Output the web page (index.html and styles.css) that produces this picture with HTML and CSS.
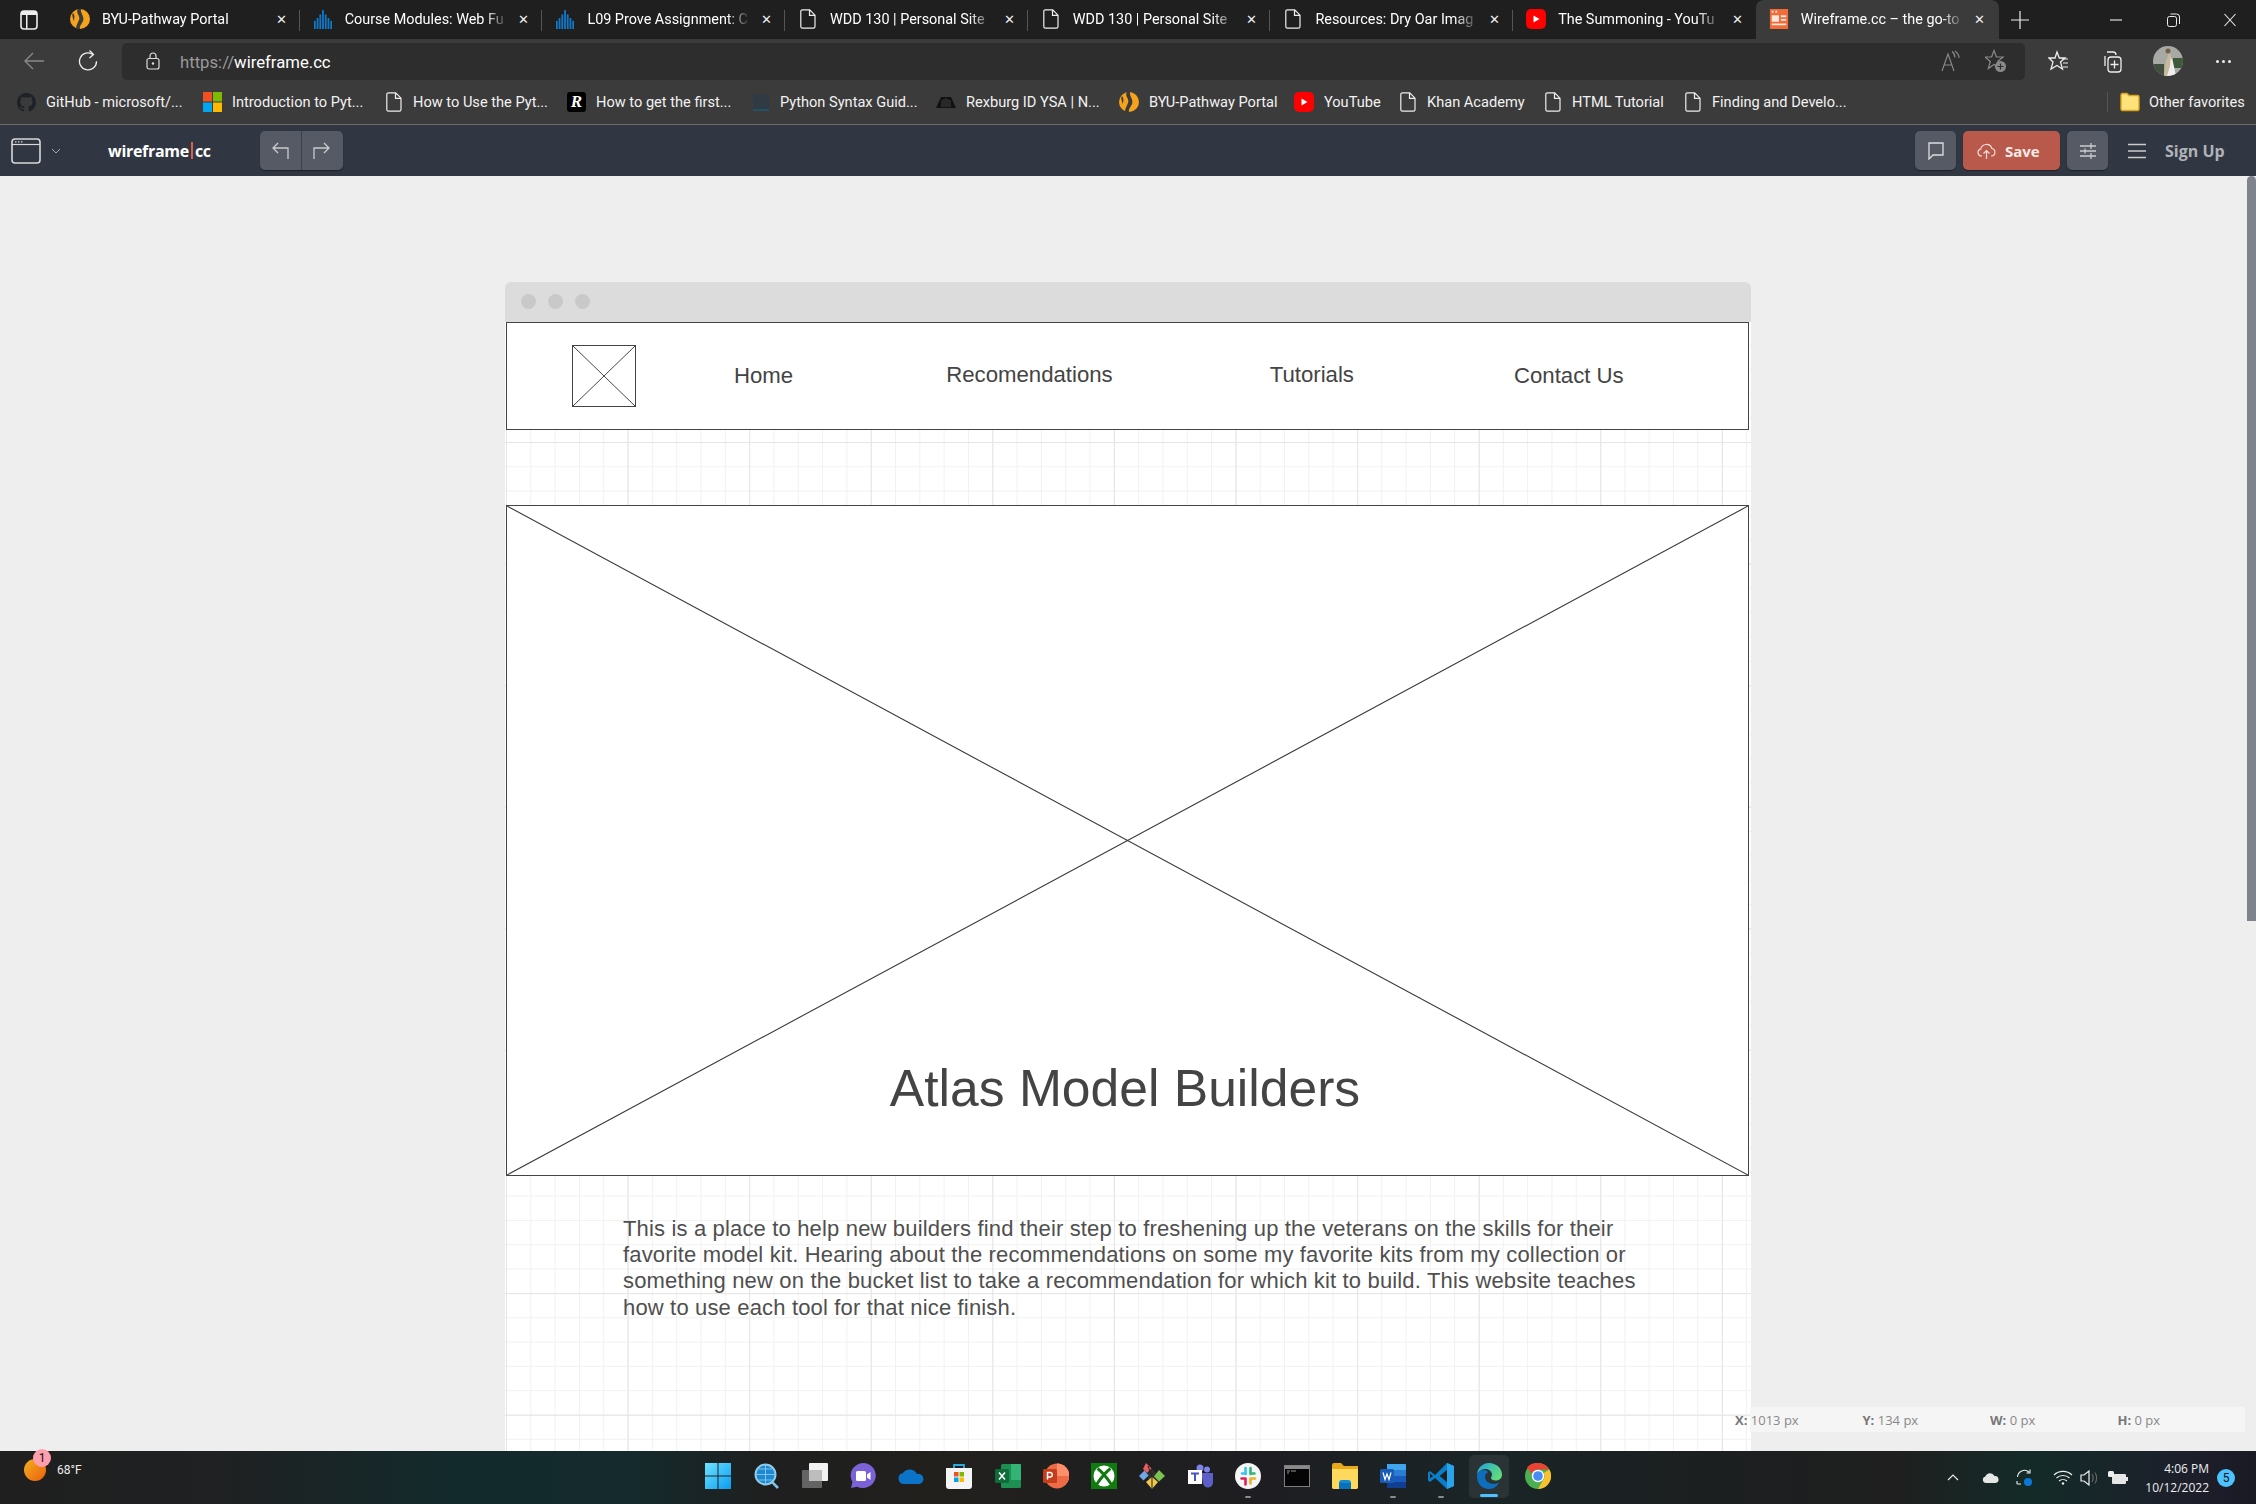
FILE: index.html
```html
<!DOCTYPE html>
<html lang="en">
<head>
  <meta charset="UTF-8">
  <title>Wireframe.cc – the go-to wireframing tool</title>
  <link rel="stylesheet" href="styles.css">
</head>
<body>
  <svg class="defs" width="0" height="0">
    <symbol id="doc" viewBox="0 0 16 20"><path d="M2.5 .8h7.2l5.3 5.4v11.3a1.7 1.7 0 0 1-1.7 1.7H2.5A1.7 1.7 0 0 1 .8 17.500V2.500A1.700 1.700 0 0 1 2.500 .8zM9.500 1v5.300H15" fill="none" stroke="#eee" stroke-width="1.200"/></symbol>
    <symbol id="byu" viewBox="0 0 20 20"><circle cx="10" cy="10" r="10" fill="#f5a21d"/><path d="M8 0C5 4 11 7 9 11c-1 3-3 5-3 9h4c-1-3 2-5 3-8 2-4-3-8-2-12zM3 4c-2 3 1 5 0 8 2-2 2-6 0-8z" fill="#3a3a3a"/></symbol>
    <symbol id="bars" viewBox="0 0 20 22"><path d="M1 13v9M4 10v12M7 6v16M10 1v21M13 6v16M16 10v12M19 13v9" stroke="#0f78c8" stroke-width="2"/></symbol>
    <symbol id="yt" viewBox="0 0 20 20"><rect width="20" height="20" y="0" rx="5" fill="#f00"/><path d="M7.500 6.500l6 3.500-6 3.500z" fill="#fff"/></symbol>
  </svg>

  <div class="tabstrip">
    <div class="sidebtn">
      <svg width="18" height="20" viewBox="0 0 18 20"><rect x="1" y="1" width="16" height="18" rx="3" fill="none" stroke="#eee" stroke-width="1.600"/><path d="M1 5h16V4a3 3 0 0 0-3-3H4a3 3 0 0 0-3 3zM6 5h1.500v14H6z" fill="#eee"/></svg>
    </div>
    <div class="tab"><svg class="fav" viewBox="0 0 20 20"><use href="#byu"/></svg><span class="tab-title">BYU-Pathway Portal</span><span class="tab-x">✕</span></div>
    <div class="tab"><svg class="fav" viewBox="0 0 20 22"><use href="#bars"/></svg><span class="tab-title">Course Modules: Web Fu</span><span class="tab-x">✕</span></div>
    <div class="tab"><svg class="fav" viewBox="0 0 20 22"><use href="#bars"/></svg><span class="tab-title">L09 Prove Assignment: C</span><span class="tab-x">✕</span></div>
    <div class="tab"><svg class="fav" viewBox="0 0 16 20"><use href="#doc"/></svg><span class="tab-title">WDD 130 | Personal Site</span><span class="tab-x">✕</span></div>
    <div class="tab"><svg class="fav" viewBox="0 0 16 20"><use href="#doc"/></svg><span class="tab-title">WDD 130 | Personal Site</span><span class="tab-x">✕</span></div>
    <div class="tab"><svg class="fav" viewBox="0 0 16 20"><use href="#doc"/></svg><span class="tab-title">Resources: Dry Oar Imag</span><span class="tab-x">✕</span></div>
    <div class="tab tab-beforeactive"><svg class="fav" viewBox="0 0 20 20"><use href="#yt"/></svg><span class="tab-title">The Summoning - YouTu</span><span class="tab-x">✕</span></div>
    <div class="tab tab-active">
      <svg class="fav" viewBox="0 0 20 22"><rect width="20" height="22" fill="#f26b38"/><path d="M2 2h2v2H2zM6 2h2v2H6zM2 7h8v7H2zM12 7h6v2h-6zM12 11h6v2h-6zM2 16h16v2H2z" fill="#ffe6da"/></svg>
      <span class="tab-title">Wireframe.cc – the go-to</span><span class="tab-x">✕</span>
    </div>
    <div class="newtab"><svg width="18" height="18" viewBox="0 0 18 18"><path d="M9 0v18M0 9h18" stroke="#eee" stroke-width="1.200"/></svg></div>
    <div class="winbtns">
      <svg width="14" height="14" viewBox="0 0 14 14"><path d="M1 7h12" stroke="#eee" stroke-width="1.100"/></svg>
      <svg width="14" height="14" viewBox="0 0 14 14"><rect x="1.500" y="3.500" width="9" height="10" rx="2" fill="none" stroke="#eee"/><path d="M4.500 1h6a3 3 0 0 1 3 3v7" fill="none" stroke="#eee"/></svg>
      <svg width="14" height="14" viewBox="0 0 14 14"><path d="M1.500 1l11 12M12.500 1l-11 12" stroke="#eee" stroke-width="1.100"/></svg>
    </div>
  </div>

  <div class="toolbar">
    <svg class="tool-back" width="22" height="18" viewBox="0 0 22 18"><path d="M21 9H2M10 1L2 9l8 8" fill="none" stroke="#8a8a8a" stroke-width="1.300"/></svg>
    <svg class="tool-reload" width="20" height="22" viewBox="0 0 20 22"><path d="M15 4.500a8.500 8.500 0 1 0 3.500 6.800" fill="none" stroke="#eee" stroke-width="1.300"/><path d="M11.500 0.500l4 4-4 3.500" fill="none" stroke="#eee" stroke-width="1.300"/></svg>
    <div class="omnibox">
      <svg class="lock" width="14" height="18" viewBox="0 0 14 18"><rect x="1" y="6.500" width="12" height="10.500" rx="2" fill="none" stroke="#ddd" stroke-width="1.200"/><path d="M4 6.500V4a3 3 0 0 1 6 0v2.500" fill="none" stroke="#ddd" stroke-width="1.200"/><circle cx="7" cy="11.500" r="1.200" fill="#ddd"/></svg>
      <span class="url"><span class="url-scheme">https://</span>wireframe.cc</span>
      <svg class="read" width="20" height="22" viewBox="0 0 20 22"><path d="M1 21L7 4l6 17M3.500 15h7M11 1.500c2 1.500 3 3.500 3 6M14 1c2 1.500 4 4 4 7" fill="none" stroke="#8a8a8a" stroke-width="1.100"/></svg>
      <svg class="addfav" width="22" height="24" viewBox="0 0 22 24"><path d="M9 1.500l2.400 6.500h6.600l-5.300 4.500 2 7L9 15.500 3.300 19.500l2-7L0 8h6.600z" fill="none" stroke="#8a8a8a" stroke-width="1.200"/><circle cx="15.500" cy="17.500" r="5.500" fill="#8a8a8a"/><path d="M15.500 14.500v6M12.500 17.500h6" stroke="#2d2d2d" stroke-width="1.200"/></svg>
    </div>
    <svg class="tool-favs" width="20" height="22" viewBox="0 0 20 22"><path d="M9 2l2.300 6H17l-4.500 4 2 7L9 15.500 3 19l2-7L1 8h6z" fill="none" stroke="#eee" stroke-width="1.300"/><path d="M14 9h6M15 13h5M15 17h5" stroke="#eee" stroke-width="1.200"/></svg>
    <svg class="tool-coll" width="20" height="24" viewBox="0 0 20 24"><path d="M5 3h6a3 3 0 0 1 3 3M3 7v10" fill="none" stroke="#eee" stroke-width="1.300"/><rect x="6" y="8" width="13" height="15" rx="3" fill="none" stroke="#eee" stroke-width="1.300"/><path d="M12.500 11.500v8M8.500 15.500h8" stroke="#eee" stroke-width="1.300"/></svg>
    <svg class="avatar" width="30" height="30" viewBox="0 0 30 30"><defs><clipPath id="avaclip"><circle cx="15" cy="15" r="15"/></clipPath></defs><g clip-path="url(#avaclip)"><rect width="30" height="30" fill="#a7a9a4"/><rect x="20" y="12" width="10" height="10" fill="#3f5a3a"/><rect y="18" width="11" height="12" fill="#40503c"/><path d="M11 30l3-14 3-6 3 6 3 14z" fill="#eee"/><path d="M13 15l3-8 2 1-1 12-3 10h-3z" fill="#c9b89a"/><circle cx="15" cy="5" r="2.500" fill="#7a5f48"/></g></svg>
    <div class="tool-more"><i></i><i></i><i></i></div>
  </div>

  <div class="bookmarks">
    <div class="bm bm-github">
      <svg width="19" height="19" viewBox="0 0 20 20"><path d="M10 0a10 10 0 0 0-3.200 19.500c.5.100.7-.2.700-.5v-1.800c-2.800.6-3.400-1.300-3.400-1.300-.4-1.200-1.100-1.500-1.100-1.500-.9-.6.100-.6.100-.6 1 .1 1.500 1 1.500 1 .9 1.500 2.300 1.100 2.900.8.100-.6.300-1.100.6-1.300-2.200-.3-4.600-1.100-4.600-5 0-1.100.4-2 1-2.700-.1-.3-.4-1.300.1-2.700 0 0 .8-.3 2.800 1a9.500 9.500 0 0 1 5 0c1.900-1.300 2.800-1 2.800-1 .5 1.400.2 2.400.1 2.700.6.700 1 1.600 1 2.700 0 3.900-2.300 4.700-4.600 5 .4.300.7.900.7 1.900V19c0 .3.200.6.700.5A10 10 0 0 0 10 0z" fill="#1d2228"/></svg>
      GitHub - microsoft/...
    </div>
    <div class="bm bm-ms">
      <svg width="19" height="20" viewBox="0 0 19 20"><rect width="9" height="9.500" fill="#f25022"/><rect x="10" width="9" height="9.500" fill="#7fba00"/><rect y="10.500" width="9" height="9.500" fill="#00a4ef"/><rect x="10" y="10.500" width="9" height="9.500" fill="#ffb900"/></svg>
      Introduction to Pyt...
    </div>
    <div class="bm bm-use bm-doc"><svg width="16" height="20" viewBox="0 0 16 20"><use href="#doc"/></svg>How to Use the Pyt...</div>
    <div class="bm bm-first">
      <span class="bm-r">R</span>
      How to get the first...
    </div>
    <div class="bm bm-py">
      <svg width="18" height="20" viewBox="0 0 18 20"><rect x="1" y="2" width="16" height="16" fill="#2f3a42"/><path d="M1 18h16" stroke="#1e5a78" stroke-width="1.500"/></svg>
      Python Syntax Guid...
    </div>
    <div class="bm bm-rex">
      <svg width="20" height="14" viewBox="0 0 20 14"><path d="M0 13L5 2h10l5 11z" fill="#111"/><path d="M6 12V5M10 12V3M14 12V5M8 12V4M12 12V4" stroke="#555" stroke-width=".7"/></svg>
      Rexburg ID YSA | N...
    </div>
    <div class="bm bm-byu"><svg width="20" height="20" viewBox="0 0 20 20"><use href="#byu"/></svg>BYU-Pathway Portal</div>
    <div class="bm bm-yt"><svg width="20" height="20" viewBox="0 0 20 20"><use href="#yt"/></svg>YouTube</div>
    <div class="bm bm-khan bm-doc"><svg width="16" height="20" viewBox="0 0 16 20"><use href="#doc"/></svg>Khan Academy</div>
    <div class="bm bm-html bm-doc"><svg width="16" height="20" viewBox="0 0 16 20"><use href="#doc"/></svg>HTML Tutorial</div>
    <div class="bm bm-find bm-doc"><svg width="16" height="20" viewBox="0 0 16 20"><use href="#doc"/></svg>Finding and Develo...</div>
    <div class="bm bm-other">
      <svg width="20" height="20" viewBox="0 0 20 20"><path d="M1 3a1.500 1.500 0 0 1 1.500-1.500H7l2 2h8.500A1.500 1.500 0 0 1 19 5v12a1.500 1.500 0 0 1-1.500 1.500h-15A1.500 1.500 0 0 1 1 17z" fill="#ffe27a" stroke="#d9a520" stroke-width="1.400"/></svg>
      Other favorites
    </div>
  </div>

  <div class="appbar">
    <svg class="app-win" width="30" height="26" viewBox="0 0 30 26"><rect x="1" y="1" width="28" height="24" rx="3" fill="none" stroke="#d8d8d8" stroke-width="1.600"/><path d="M1 6.500h28" stroke="#d8d8d8" stroke-width="1.200"/><path d="M4 3.800h1.500M7 3.800h1.500M10 3.800h1.500" stroke="#d8d8d8" stroke-width="1.200"/></svg>
    <svg class="app-chev" width="10" height="6" viewBox="0 0 10 6"><path d="M1 1l4 4 4-4" fill="none" stroke="#aaa"/></svg>
    <div class="app-logo">wireframe<span class="app-logo-bar"></span>cc</div>
    <div class="btngroup">
      <div class="appbtn"><svg width="18" height="18" viewBox="0 0 18 18"><path d="M17 17V6H2M7 1L2 6l5 5" fill="none" stroke="#ccc" stroke-width="1.300"/></svg></div>
      <div class="appbtn"><svg width="18" height="18" viewBox="0 0 18 18"><path d="M1 17V6h15M11 1l5 5-5 5" fill="none" stroke="#ccc" stroke-width="1.300"/></svg></div>
    </div>
    <div class="app-spacer"></div>
    <div class="appbtn appbtn-solo"><svg width="16" height="18" viewBox="0 0 16 18"><path d="M1 1h14v12H5l-4 4z" fill="none" stroke="#ddd" stroke-width="1.300"/></svg></div>
    <div class="savebtn">
      <svg width="19" height="19" viewBox="0 0 19 19"><path d="M5 15H4.500a3.500 3.500 0 0 1-.8-6.900 5.800 5.800 0 0 1 11.200-.6A3.800 3.800 0 0 1 14.500 15H14M9.500 18V9.500M6.500 12.500l3-3 3 3" fill="none" stroke="#f3dcd8" stroke-width="1.200"/></svg>
      Save
    </div>
    <div class="appbtn appbtn-solo"><svg width="18" height="18" viewBox="0 0 18 18"><path d="M1 4h16M1 9h16M1 14h16M12 1v6M6 6.500v5M12 11v6" stroke="#ccc" stroke-width="1.300"/></svg></div>
    <svg class="app-menu" width="20" height="16" viewBox="0 0 20 16"><path d="M1 1.500h18M1 8h18M1 14.500h18" stroke="#ccc" stroke-width="1.400"/></svg>
    <div class="app-signup">Sign Up</div>
  </div>

  <div class="canvas">
    <div class="mock">
      <div class="mock-title"><i></i><i></i><i></i></div>
      <div class="mock-body">
        <nav class="wf-nav">
          <svg class="wf-logo" viewBox="0 0 63 61" preserveAspectRatio="none"><path d="M0 0l63 61M63 0L0 61" stroke="#444" stroke-width="1"/></svg>
          <a class="wf-link wf-home">Home</a>
          <a class="wf-link wf-rec">Recomendations</a>
          <a class="wf-link wf-tut">Tutorials</a>
          <a class="wf-link wf-contact">Contact Us</a>
        </nav>
        <section class="wf-hero">
          <svg class="wf-cross" viewBox="0 0 100 100" preserveAspectRatio="none"><path d="M0 0L100 100M100 0L0 100" stroke="#3a3a3a" stroke-width="1.100" vector-effect="non-scaling-stroke"/></svg>
          <h1 class="wf-title">Atlas Model Builders</h1>
        </section>
        <p class="wf-text">This is a place to help new builders find their step to freshening up the veterans on the skills for their<br>favorite model kit. Hearing about the recommendations on some my favorite kits from my collection or<br>something new on the bucket list to take a recommendation for which kit to build. This website teaches<br>how to use each tool for that nice finish.</p>
      </div>
    </div>
    <div class="scrollthumb"></div>
    <div class="coords">
      <span class="coord"><b>X:</b> 1013 px</span>
      <span class="coord"><b>Y:</b> 134 px</span>
      <span class="coord"><b>W:</b> 0 px</span>
      <span class="coord"><b>H:</b> 0 px</span>
    </div>
  </div>

  <div class="taskbar">
    <div class="weather">
      <span class="sun"><span class="sun-badge">1</span></span>
      <span class="temp">68°F</span>
    </div>
    <div class="taskicons">
      <div class="ti"><svg viewBox="0 0 26 26"><defs><linearGradient id="wing" x1="0" y1="0" x2="1" y2="1"><stop offset="0" stop-color="#6fe3ff"/><stop offset="1" stop-color="#0a9cf0"/></linearGradient></defs><path d="M0 0h12.500v12.500H0zM13.500 0H26v12.500H13.500zM0 13.500h12.500V26H0zM13.500 13.500H26V26H13.500z" fill="url(#wing)"/></svg></div>
      <div class="ti"><svg viewBox="0 0 26 26"><path d="M17 18l7 7" stroke="#7cc5e8" stroke-width="2.500"/><circle cx="11.500" cy="11.500" r="10" fill="#1f88d0" stroke="#8ecbe6" stroke-width="2"/><path d="M2 11.500h19M11.500 2v19M5 6h13M5 17h13" stroke="#8fd3f5" stroke-width=".8"/></svg></div>
      <div class="ti"><svg viewBox="0 0 26 26"><rect x="7" y="0" width="19" height="18" rx="1" fill="#f2f2f2"/><rect x="0" y="7" width="20" height="18" rx="1" fill="#6c6c6c" opacity=".9"/><rect x="7" y="7" width="13" height="11" fill="#bdbdbd"/></svg></div>
      <div class="ti"><svg viewBox="0 0 26 26"><path d="M13 0a13 12.500 0 1 1-6 23.700L1 25l1.500-6A13 12.500 0 0 1 13 0z" fill="#7b62d6"/><rect x="6" y="8" width="10" height="10" rx="1.500" fill="#fff"/><path d="M17 11.500l3.500-2.500v8l-3.500-2.500z" fill="#fff"/></svg></div>
      <div class="ti"><svg viewBox="0 0 26 16" class="ti-wide"><path d="M6 16a5.500 5.500 0 0 1-1-10.900A8 8 0 0 1 19 6a5 5 0 0 1 2.500 10z" fill="#0c74c8"/></svg></div>
      <div class="ti"><svg viewBox="0 0 26 26"><path d="M8 6V2h10v4" fill="none" stroke="#2ea8e0" stroke-width="1.800"/><path d="M0 5h26v18a3 3 0 0 1-3 3H3a3 3 0 0 1-3-3z" fill="#f4f4f4"/><rect x="8" y="9" width="4.500" height="4.500" fill="#f25022"/><rect x="13.500" y="9" width="4.500" height="4.500" fill="#7fba00"/><rect x="8" y="14.500" width="4.500" height="4.500" fill="#00a4ef"/><rect x="13.500" y="14.500" width="4.500" height="4.500" fill="#ffb900"/></svg></div>
      <div class="ti"><svg viewBox="0 0 26 26"><rect x="6" y="1" width="20" height="24" rx="1.500" fill="#1d8f53"/><path d="M16 1h9a1 1 0 0 1 1 1v6H16zM16 8h10v9H16z" fill="#33b374"/><rect x="0" y="6" width="14" height="14" rx="1.500" fill="#0f6c3a"/><path d="M4 9.500l6 7M10 9.500l-6 7" stroke="#fff" stroke-width="1.500"/></svg></div>
      <div class="ti"><svg viewBox="0 0 26 26"><circle cx="14" cy="13" r="12.500" fill="#ed6c47"/><path d="M14 .5a12.500 12.500 0 0 1 12.500 12.500H14z" fill="#ff8f6b"/><rect x="0" y="6" width="14" height="14" rx="1.500" fill="#c43e1c"/><path d="M4.500 16.500V9.500h3a2.300 2.300 0 0 1 0 4.500h-3" fill="none" stroke="#fff" stroke-width="1.500"/></svg></div>
      <div class="ti"><svg viewBox="0 0 26 26"><rect width="26" height="26" fill="#107c10"/><circle cx="13" cy="13" r="10.500" fill="#fff"/><path d="M6.500 5.500C10 8 16 15 20.500 21.500M19.500 5.500C16 8 10 15 5.500 21.500" fill="none" stroke="#107c10" stroke-width="3"/></svg></div>
      <div class="ti"><svg viewBox="0 0 26 26"><path d="M13 6l6.500 6.500L13 19 6.500 12.500z" fill="#2f2f2f"/><path d="M7 0l5.500 5.500L8 10 4 6z" fill="#e85d5d"/><path d="M0 13l5.500-5.500 4 5-5 5z" fill="#6fa8e8"/><path d="M20 7l6 6-6 5.500-5-5z" fill="#7cc24e"/><path d="M13 26l-6-7 6-5 6 5z" fill="#f0c94a"/><path d="M9 3l4 10v13" stroke="#222" fill="none"/></svg></div>
      <div class="ti"><svg viewBox="0 0 26 26"><circle cx="20" cy="6.500" r="3" fill="#7b83eb"/><path d="M14 10h12v9a5 5 0 0 1-10 1z" fill="#5b5fc7"/><circle cx="13" cy="5" r="3.500" fill="#7b83eb"/><rect x="1" y="7" width="14" height="14" fill="#fff"/><path d="M4 10.500h8M8 10.500V18" stroke="#4b53bc" stroke-width="2"/></svg></div>
      <div class="ti"><svg viewBox="0 0 26 26"><circle cx="13" cy="13" r="13" fill="#f6f6f6"/><path d="M10.500 5v6M7 10.500h4" stroke="#36c5f0" stroke-width="2.600" stroke-linecap="round"/><path d="M15.500 5v6M15.500 10.500h4" stroke="#2eb67d" stroke-width="2.600" stroke-linecap="round"/><path d="M10.500 15.500v6M6.500 15.500h4" stroke="#e01e5a" stroke-width="2.600" stroke-linecap="round"/><path d="M15.500 15.500v5M15.500 15.500h4.500" stroke="#ecb22e" stroke-width="2.600" stroke-linecap="round"/></svg></div>
      <div class="ti"><svg viewBox="0 0 26 22" class="ti-term"><rect x=".5" y=".5" width="25" height="21" fill="#050505" stroke="#7e7e7e"/><rect x="1" y="1" width="24" height="3" fill="#8a8a8a"/><path d="M3 6h3M7 6h5M3 8h2" stroke="#bbb" stroke-width=".8"/></svg></div>
      <div class="ti"><svg viewBox="0 0 26 26"><path d="M0 2a2 2 0 0 1 2-2h7l3 3h14v21a2 2 0 0 1-2 2H2a2 2 0 0 1-2-2z" fill="#e9a71c"/><path d="M0 6h26v18a2 2 0 0 1-2 2H2a2 2 0 0 1-2-2z" fill="#ffd95e"/><path d="M7 26v-6a3 3 0 0 1 3-3h6a3 3 0 0 1 3 3v6z" fill="#0f8bd6"/><rect x="7" y="20" width="12" height="6" fill="#0a6fbd"/></svg></div>
      <div class="ti"><svg viewBox="0 0 26 26"><rect x="7" y="1" width="19" height="24" rx="1.500" fill="#2b7cd3"/><path d="M7 1h18a1 1 0 0 1 1 1v5H7z" fill="#41a5ee"/><path d="M7 13h19v6H7z" fill="#185abd"/><path d="M7 19h19v5a1 1 0 0 1-1 1H7z" fill="#103f91"/><rect x="0" y="6" width="14" height="14" rx="1.500" fill="#1a5bb8"/><path d="M3 9.500l2 7 2-5.500 2 5.500 2-7" fill="none" stroke="#fff" stroke-width="1.200"/></svg></div>
      <div class="ti"><svg viewBox="0 0 26 26"><path d="M19 0l7 3v20l-7 3-12-11-5 4-2-1.500V9.500L2 8l5 4z" fill="#0a7ec7"/><path d="M19 7l-7 6 7 6z" fill="#1f1f1f"/><path d="M2 10.500l3 2.500-3 2.500z" fill="#1f1f1f"/><path d="M19 0l7 3v20l-7 3z" fill="#2aa3e8"/><path d="M19 7l-7 6 7 6z" fill="#1f1f1f"/></svg></div>
      <div class="ti ti-active"><svg viewBox="0 0 26 26"><defs><linearGradient id="edgeg" x1="0" y1="0" x2="1" y2=".6"><stop offset="0" stop-color="#1fa3e0"/><stop offset="1" stop-color="#5fdc7c"/></linearGradient></defs><path d="M1 11C2 4 7 0 13 0c7 0 13 5 13 11.500 0 4-3 6-6.500 6-2.500 0-4.500-1-4.500-2.500 0-1 1-1.500 1-3.500 0-3-3-5.500-6.500-5.500S3 8 1 11z" fill="url(#edgeg)"/><path d="M1 11c3-4 8-5 10-3 3 2-2 1-2 6 0 4 4 7 9 7 2 0 4-1 5-1.500C21 24 17 26 13 26 6 26 0 20 1 11z" fill="#0c6ebd"/></svg><i class="ti-bar"></i></div>
      <div class="ti"><svg viewBox="0 0 26 26"><circle cx="13" cy="13" r="13" fill="#4caf50"/><path d="M13 0a13 13 0 0 1 11.300 6.500H13A6.500 6.500 0 0 0 6.800 11L2 4.500A13 13 0 0 1 13 0z" fill="#ea4335"/><path d="M24.300 6.500A13 13 0 0 1 13 26l5.600-9.700A6.500 6.500 0 0 0 18.700 10z" fill="#fbc02d"/><circle cx="13" cy="13" r="6.200" fill="#fff"/><circle cx="13" cy="13" r="4.800" fill="#4a8af4"/></svg></div>
    </div>
    <div class="tray">
      <svg class="tray-chev" width="12" height="7" viewBox="0 0 12 7"><path d="M1 6l5-5 5 5" fill="none" stroke="#eee" stroke-width="1.100"/></svg>
      <svg class="tray-cloud" width="17" height="11" viewBox="0 0 17 11"><path d="M4 11a3.300 3.300 0 0 1-.6-6.500A5 5 0 0 1 12.500 4 3.500 3.500 0 0 1 13.500 11z" fill="#e6e6e6"/></svg>
      <svg class="tray-sync" width="18" height="18" viewBox="0 0 18 18"><path d="M1.500 8A7 7 0 0 1 13 3M14 .5V4h-3.500M1 15h4M1 12v3" fill="none" stroke="#eee" stroke-width="1.100"/><circle cx="12" cy="13" r="4" fill="#0a78d8"/></svg>
      <svg class="tray-wifi" width="20" height="15" viewBox="0 0 20 15"><path d="M1 5a13 13 0 0 1 18 0M3.500 8a9.500 9.500 0 0 1 13 0M6 11a6 6 0 0 1 8 0" fill="none" stroke="#eee" stroke-width="1.100"/><circle cx="10" cy="13.500" r="1.200" fill="#eee"/></svg>
      <svg class="tray-vol" width="20" height="16" viewBox="0 0 20 16"><path d="M1 5h3l5-4v14l-5-4H1z" fill="none" stroke="#eee" stroke-width="1.200"/><path d="M12 4c1.500 2 1.500 6 0 8M15 2.500c2 3 2 8 0 11" fill="none" stroke="#777" stroke-width="1"/></svg>
      <svg class="tray-batt" width="20" height="14" viewBox="0 0 20 14"><rect x="4" y="3" width="14" height="10" rx="1" fill="#e6e6e6"/><rect x="18" y="6" width="2" height="4" fill="#e6e6e6"/><rect x="0" y="0" width="6" height="6" rx="1.500" fill="#eee"/></svg>
      <div class="clock"><span>4:06 PM</span><span>10/12/2022</span></div>
      <span class="notif">5</span>
    </div>
  </div>
</body>
</html>
```

FILE: styles.css
```css
* {
  box-sizing: border-box;
}

html, body {
  margin: 0;
  height: 1504px;
  overflow: hidden;
}

body {
  display: flex;
  flex-direction: column;
  width: 2256px;
  font-family: "Roboto", "Liberation Sans", sans-serif;
  background-color: #eee;
}

.defs {
  position: absolute;
}

/* browser tabs */
.tabstrip {
  display: flex;
  align-items: center;
  height: 39px;
  background-color: #1f1f1f;
  color: #fff;
  font-size: 14.400px;
}

.sidebtn {
  display: flex;
  justify-content: center;
  width: 57px;
}

.tab {
  display: flex;
  align-items: center;
  flex: none;
  width: 242.7px;
  height: 39px;
  padding: 0 0 1px 13px;
  position: relative;
}

.tab::after {
  content: "";
  position: absolute;
  right: 0;
  top: 10px;
  width: 1px;
  height: 21px;
  background-color: #555;
}

.tab-active,
.tab-beforeactive::after,
.tab-active::after {
  background-color: transparent;
}

.tab-active {
  background-color: #3b3b3b;
  border-radius: 8px 8px 0 0;
}

.fav {
  flex: none;
  width: 20px;
  height: 20px;
}

.tab-title {
  width: 164px;
  margin-left: 12px;
  overflow: hidden;
  white-space: nowrap;
  -webkit-mask-image: linear-gradient(90deg, #000 140px, transparent 164px);
  mask-image: linear-gradient(90deg, #000 140px, transparent 164px);
}

.tab-x {
  width: 14px;
  margin-left: 8px;
  font-size: 13px;
  text-align: center;
  color: #eee;
}

.newtab {
  display: flex;
  margin-left: 12px;
}

.winbtns {
  display: flex;
  gap: 43px;
  margin-left: 80px;
}

/* address bar */
.toolbar {
  display: flex;
  align-items: center;
  height: 43px;
  background-color: #3b3b3b;
  padding-top: 1px;
}

.tool-back {
  margin-left: 23px;
}

.tool-reload {
  margin-left: 33px;
}

.omnibox {
  display: flex;
  align-items: center;
  width: 1903px;
  height: 37px;
  margin-left: 24px;
  padding-left: 24px;
  background-color: #2d2d2d;
  border-radius: 5px;
}

.url {
  margin-left: 20px;
  padding-top: 2px;
  font-size: 16.700px;
  color: #fff;
}

.url-scheme {
  color: #9a9a9a;
}

.read {
  margin-left: auto;
}

.addfav {
  margin: 0 18px 0 24px;
}

.tool-favs {
  margin-left: 23px;
}

.tool-coll {
  margin-left: 34px;
}

.avatar {
  margin-left: 31px;
}

.tool-more {
  display: flex;
  gap: 3px;
  margin-left: 33px;
}

.tool-more i {
  width: 3px;
  height: 3px;
  border-radius: 50%;
  background-color: #eee;
}

/* favorites bar */
.bookmarks {
  display: flex;
  align-items: center;
  height: 43px;
  padding: 0 0 2px 17px;
  background-color: #3b3b3b;
  border-bottom: 1px solid #6e6e6e;
  color: #f2f2f2;
  font-size: 14.600px;
}

.bm {
  display: flex;
  align-items: center;
  gap: 10px;
  flex: none;
  white-space: nowrap;
}

.bm-doc {
  gap: 11px;
}

.bm-github { width: 186px; }
.bm-ms { width: 183px; }
.bm-use { width: 181px; }
.bm-first { width: 185px; }
.bm-py { width: 184px; }
.bm-rex { width: 183px; }
.bm-byu { width: 175px; }
.bm-yt { width: 106px; }
.bm-khan { width: 145px; }
.bm-html { width: 140px; }
.bm-find { width: 422px; }

.bm-r {
  display: flex;
  align-items: center;
  justify-content: center;
  width: 19px;
  height: 20px;
  border-radius: 3px;
  background-color: #000;
  color: #fff;
  font-family: "Liberation Serif", serif;
  font-style: italic;
  font-weight: bold;
  font-size: 17px;
}

.bm-other {
  padding-left: 12px;
  gap: 9px;
  border-left: 1px solid #555;
}

/* wireframe.cc bar */
.appbar {
  display: flex;
  align-items: center;
  height: 51px;
  background-color: #303642;
  color: #fff;
}

.app-win {
  margin-left: 11px;
}

.app-chev {
  margin-left: 10px;
}

.app-logo {
  display: flex;
  align-items: center;
  margin-left: 47px;
  font-family: "Open Sans", sans-serif;
  font-weight: 700;
  font-size: 16px;
  letter-spacing: -.3px;
}

.app-logo-bar {
  width: 2px;
  height: 17px;
  margin: 0 2px;
  background-color: #d9604c;
}

.btngroup {
  display: flex;
  margin-left: 49px;
  border-radius: 5px;
  overflow: hidden;
  box-shadow: 0 1px 1px rgba(0, 0, 0, .4);
}

.appbtn {
  display: flex;
  align-items: center;
  justify-content: center;
  width: 41px;
  height: 39px;
  background-color: #555a65;
}

.appbtn + .appbtn {
  width: 42px;
  border-left: 1px solid #3a3f4a;
}

.appbtn-solo {
  border-radius: 5px;
  box-shadow: 0 1px 1px rgba(0, 0, 0, .4);
}

.app-spacer {
  flex: 1;
}

.savebtn {
  display: flex;
  align-items: center;
  gap: 9px;
  width: 97px;
  height: 39px;
  margin: 0 7px;
  padding-left: 14px;
  background-color: #b9594c;
  border-radius: 5px;
  box-shadow: 0 1px 1px rgba(0, 0, 0, .4);
  font-family: "Open Sans", sans-serif;
  font-weight: 700;
  font-size: 15px;
  color: #f8ebe8;
}

.app-menu {
  margin-left: 19px;
}

.app-signup {
  width: 109px;
  padding-left: 18px;
  font-family: "Open Sans", sans-serif;
  font-weight: 700;
  font-size: 16px;
  color: #b0b3b9;
}

/* editor canvas */
.canvas {
  flex: 1;
  position: relative;
  min-height: 0;
  padding: 106px 0 0 505px;
  background-color: #eee;
  overflow: hidden;
}

.mock {
  width: 1246px;
}

.mock-title {
  display: flex;
  align-items: center;
  gap: 12px;
  height: 40px;
  padding: 0 0 1px 16px;
  background-color: #dcdcdc;
  border-radius: 6px 6px 0 0;
}

.mock-title i {
  width: 15px;
  height: 15px;
  border-radius: 50%;
  background-color: #c9c9c9;
}

.mock-body {
  height: 1200px;
  padding-left: 1px;
  background-color: #fff;
  background-image:
    linear-gradient(90deg, #e5e5e5 1px, transparent 1px),
    linear-gradient(#e5e5e5 1px, transparent 1px),
    linear-gradient(90deg, #f1f1f1 1px, transparent 1px),
    linear-gradient(#f1f1f1 1px, transparent 1px);
  background-size: 121.6px 121.6px, 121.6px 121.6px, 24.32px 24.32px, 24.32px 24.32px;
  background-position: 1px -1.6px;
}

.wf-nav {
  display: flex;
  align-items: center;
  width: 1243px;
  height: 108px;
  background-color: #fff;
  border: 1px solid #444;
  color: #444;
}

.wf-logo {
  width: 64px;
  height: 62px;
  margin-left: 65px;
  border: 1px solid #444;
  overflow: visible;
}

.wf-link {
  font-family: "Liberation Sans", Arial, sans-serif;
  font-size: 22.200px;
  white-space: nowrap;
}

.wf-home {
  margin-left: 98px;
}

.wf-rec {
  margin-left: 153px;
  padding-bottom: 2px;
}

.wf-tut {
  margin-left: 157px;
  padding-bottom: 2px;
}

.wf-contact {
  margin-left: 160px;
}

.wf-hero {
  display: flex;
  align-items: flex-end;
  justify-content: center;
  position: relative;
  width: 1243px;
  height: 671px;
  margin-top: 75px;
  background-color: #fff;
  border: 1px solid #444;
}

.wf-cross {
  position: absolute;
  left: 0;
  top: 0;
  width: 100%;
  height: 100%;
}

.wf-title {
  position: relative;
  margin: 0 5px 57px 0;
  font-family: "Liberation Sans", Arial, sans-serif;
  font-weight: normal;
  font-size: 51.600px;
  line-height: 60px;
  color: #444;
}

.wf-text {
  margin: 40px 0 0 117px;
  font-family: "Liberation Sans", Arial, sans-serif;
  font-size: 22px;
  line-height: 26.200px;
  letter-spacing: .16px;
  color: #4f4f4f;
}

.scrollthumb {
  position: absolute;
  right: 0;
  top: 0;
  width: 9px;
  height: 745px;
  background-color: #7f838b;
  border-radius: 5px 5px 0 0;
}

.coords {
  display: flex;
  position: absolute;
  right: 11px;
  bottom: 19px;
  width: 520px;
  height: 25px;
  padding-left: 10px;
  align-items: center;
  background: linear-gradient(90deg, transparent 25px, #f5f5f5 25px);
  font-family: "Open Sans", sans-serif;
  font-size: 13px;
  color: #888;
}

.coord {
  width: 129.500px;
}

.coord b {
  color: #777;
}

/* windows taskbar */
.taskbar {
  display: grid;
  grid-template-columns: 1fr auto 1fr;
  align-items: center;
  flex: none;
  height: 53px;
  background: linear-gradient(90deg, #1f1f1f 0, #1f2122 10%, #132a2c 20%, #142a2c 28%, #1f1f1f 34%, #21201d 42%, #1e1e22 56%, #1a2426 66%, #1c1f20 76%, #1f1f1f 84%, #132b28 90%, #1d1f2b 97%, #1a1a24 100%);
  color: #eee;
}

.weather {
  display: flex;
  align-items: center;
  padding: 0 0 15px 24px;
}

.sun {
  position: relative;
  width: 22px;
  height: 22px;
  border-radius: 50%;
  background: linear-gradient(135deg, #f2b020, #ec5f0c);
}

.sun-badge {
  position: absolute;
  left: 9px;
  top: -10px;
  width: 18px;
  height: 18px;
  border-radius: 50%;
  background-color: #ff9fae;
  font-size: 12px;
  line-height: 18px;
  text-align: center;
  color: #111;
}

.temp {
  margin-left: 11px;
  font-size: 12px;
}

.taskicons {
  display: flex;
  padding-bottom: 3px;
}

.ti {
  display: flex;
  flex-direction: column;
  align-items: center;
  justify-content: center;
  position: relative;
  width: 48.200px;
  height: 43px;
}

.ti svg {
  width: 26px;
  height: 26px;
}

.ti svg.ti-wide {
  height: 16px;
}

.ti svg.ti-term {
  height: 22px;
}

.ti:nth-child(12)::after,
.ti:nth-child(15)::after,
.ti:nth-child(16)::after {
  content: "";
  position: absolute;
  bottom: 0;
  left: 21px;
  width: 6px;
  height: 2px;
  border-radius: 1px;
  background-color: #8a8a8a;
}

.ti-active {
  background-color: rgba(255, 255, 255, .07);
  border-radius: 5px;
  width: 40px;
  margin: 0 4.100px;
}

.ti-bar {
  position: absolute;
  bottom: 1px;
  left: 11px;
  width: 18px;
  height: 3px;
  border-radius: 2px;
  background-color: #4cc2ff;
}

.tray {
  display: flex;
  align-items: center;
  justify-content: flex-end;
  padding-right: 21px;
}

.tray-cloud {
  margin-left: 23px;
}

.tray-sync {
  margin-left: 17px;
}

.tray-wifi {
  margin-left: 19px;
}

.tray-vol {
  margin-left: 7px;
}

.tray-batt {
  margin-left: 8px;
}

.clock {
  display: flex;
  flex-direction: column;
  align-items: flex-end;
  margin-left: 17px;
  font-family: "Open Sans", sans-serif;
  font-size: 12px;
  line-height: 19px;
}

.notif {
  width: 18px;
  height: 18px;
  margin-left: 8px;
  border-radius: 50%;
  background-color: #4cc2ff;
  font-size: 12px;
  line-height: 18px;
  text-align: center;
  color: #111;
}
```
